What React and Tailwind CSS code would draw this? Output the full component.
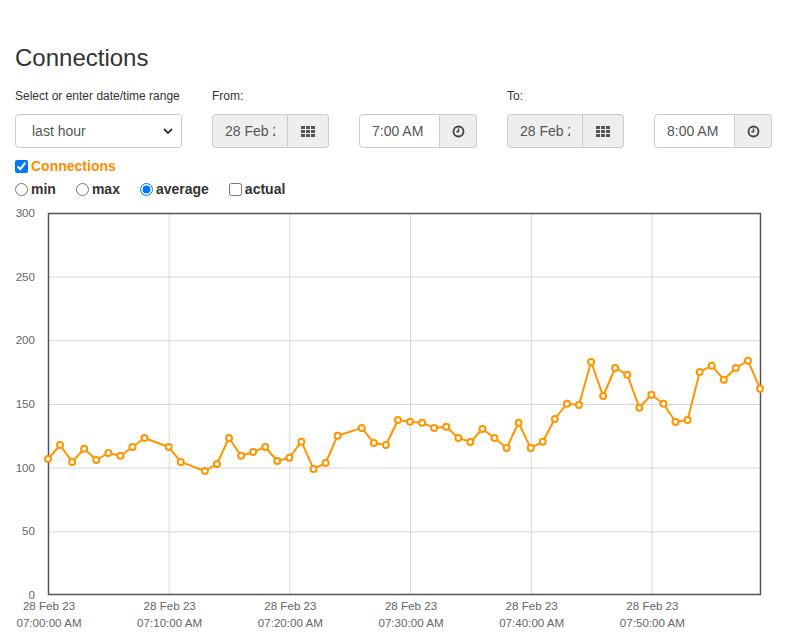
import React from "react";

// minute offset from 07:00, average connections
const points = [
  [0, 106.8], [1, 117.8], [2, 104.5], [3, 114.9], [4, 106], [5, 111.5], [6, 109.4], [7, 116.2], [8, 123.3],
  [10, 116.2], [11, 104.5], [13, 97.4], [14, 102.9], [15, 123.3], [16, 109.4], [17, 112.3], [18, 116.2],
  [19, 105.2], [20, 107.8], [21, 120.4], [22, 99], [23, 103.7], [24, 125.1], [26, 131.2], [27, 119.4],
  [28, 117.8], [29, 137.4], [30, 136.1], [31, 135.3], [32, 131.2], [33, 132.2], [34, 123.3], [35, 120.2],
  [36, 130.4], [37, 123.3], [38, 115.4], [39, 135.3], [40, 115.4], [41, 120.4], [42, 138.2], [43, 150.2],
  [44, 149.2], [45, 183], [46, 156.3], [47, 178.3], [48, 173], [49, 147.1], [50, 157.3], [51, 150.2],
  [52, 135.9], [53, 137.4], [54, 175.1], [55, 180.1], [56, 169.1], [57, 178.3], [58, 184], [59, 162],
];

const LEFT = 48;
const RIGHT = 760;
const TOP = 213;
const BOTTOM = 595;
const px = (m) => LEFT + (m * (RIGHT - LEFT)) / 59;
const py = (v) => BOTTOM - (v * (BOTTOM - TOP)) / 300;

const GridIcon = () => (
  <svg width="14" height="11" viewBox="0 0 14 11" fill="#555">
    {[0, 5, 10].map((x) =>
      [0, 4, 8].map((y) => <rect key={`${x}-${y}`} x={x} y={y} width="4" height="3" />)
    )}
  </svg>
);

const ClockIcon = () => (
  <svg width="13" height="13" viewBox="0 0 13 13" fill="none" stroke="#444" strokeWidth="1.8">
    <circle cx="6.5" cy="6.5" r="5" />
    <path d="M6.5 3.5 V6.8 H4.3" strokeWidth="1.5" />
  </svg>
);

const DateGroup = () => (
  <div className="flex h-[34px] w-[117px]">
    <input
      readOnly
      value="28 Feb 2023"
      className="w-[76px] min-w-0 rounded-l-[4px] border border-[#ccc] bg-[#eee] px-[12px] text-[14px] text-[#555] outline-none"
    />
    <button className="flex w-[41px] items-center justify-center rounded-r-[4px] border border-l-0 border-[#ccc] bg-[#eee]">
      <GridIcon />
    </button>
  </div>
);

const TimeGroup = ({ value }) => (
  <div className="flex h-[34px] w-[118px]">
    <input
      readOnly
      value={value}
      className="w-[81px] min-w-0 rounded-l-[4px] border border-[#ccc] bg-white px-[12px] text-[14px] text-[#555] outline-none"
    />
    <button className="flex w-[37px] items-center justify-center rounded-r-[4px] border border-l-0 border-[#ccc] bg-[#eee]">
      <ClockIcon />
    </button>
  </div>
);

const Chart = () => {
  const line = points.map(([m, v]) => `${px(m).toFixed(1)},${py(v).toFixed(1)}`).join(" ");
  const xTicks = [0, 10, 20, 30, 40, 50];
  return (
    <svg width="787" height="435" viewBox="0 199 787 435" className="block">
      {[50, 100, 150, 200, 250].map((v) => (
        <line key={v} x1={LEFT} x2={RIGHT} y1={py(v) + 0.5} y2={py(v) + 0.5} stroke="#d9d9d9" />
      ))}
      {xTicks.slice(1).map((m) => (
        <line key={m} x1={px(m) + 0.5} x2={px(m) + 0.5} y1={TOP} y2={BOTTOM} stroke="#d9d9d9" />
      ))}
      <rect x={LEFT + 0.5} y={TOP + 0.5} width={RIGHT - LEFT} height={BOTTOM - TOP - 1} fill="none" stroke="#555" strokeWidth="1.5" />

      <g fontFamily="'Liberation Sans', Arial, sans-serif" fontSize="11.6" fill="#666">
        {[0, 50, 100, 150, 200, 250, 300].map((v) => (
          <text key={v} x="35" y={py(v) + 4} textAnchor="end">{v}</text>
        ))}
        {xTicks.map((m) => (
          <g key={m}>
            <text x={px(m) + 1} y="610" textAnchor="middle">28 Feb 23</text>
            <text x={px(m) + 1} y="627" textAnchor="middle">{`07:${String(m).padStart(2, "0")}:00 AM`}</text>
          </g>
        ))}
      </g>

      <polyline points={line} fill="none" stroke="#ff9500" strokeWidth="2" strokeLinejoin="round" />
      {points.map(([m, v]) => (
        <circle key={m} cx={px(m)} cy={py(v)} r="3" fill="#fff" stroke="#ff9500" strokeWidth="2" />
      ))}
    </svg>
  );
};

export default function App() {
  return (
    <div className="min-h-screen bg-white font-['Liberation_Sans',Arial,sans-serif] text-[#333]">
      <div className="px-[15px] pt-[45px]">
        <h3 className="text-[24px] leading-[26px]">Connections</h3>

        <div className="mt-[17px] flex gap-[30px]">
          <div className="flex flex-col">
            <label className="h-[17px] text-[12px] leading-[17px]">Select or enter date/time range</label>
            <div className="relative mt-[9px] w-[167px]">
              <select className="h-[34px] w-full appearance-none rounded-[4px] border border-[#ccc] bg-white pl-[16px] text-[14px] text-[#555] outline-none">
                <option>last hour</option>
              </select>
              <svg className="pointer-events-none absolute right-[9px] top-[14px]" width="10" height="6" viewBox="0 0 10 6" fill="none" stroke="#333" strokeWidth="1.8">
                <path d="M1 1 L5 5 L9 1" />
              </svg>
            </div>
          </div>
          <div className="flex flex-col">
            <label className="h-[17px] text-[12px] leading-[17px]">From:</label>
            <div className="mt-[9px]"><DateGroup /></div>
          </div>
          <div className="flex flex-col">
            <div className="h-[17px]" />
            <div className="mt-[9px]"><TimeGroup value="7:00 AM" /></div>
          </div>
          <div className="flex flex-col">
            <label className="h-[17px] text-[12px] leading-[17px]">To:</label>
            <div className="mt-[9px]"><DateGroup /></div>
          </div>
          <div className="flex flex-col">
            <div className="h-[17px]" />
            <div className="mt-[9px]"><TimeGroup value="8:00 AM" /></div>
          </div>
        </div>

        <label className="mt-[8px] flex h-[20px] items-center text-[14px] font-bold text-[#ff8c00]">
          <input type="checkbox" defaultChecked className="m-0 mr-[3px] h-[13px] w-[13px]" />
          Connections
        </label>

        <div className="mt-[3px] flex h-[20px] items-center gap-[20px] text-[14px] font-bold">
          <label className="flex items-center">
            <input type="radio" name="agg" className="m-0 mr-[3px] h-[13px] w-[13px]" />
            min
          </label>
          <label className="flex items-center">
            <input type="radio" name="agg" className="m-0 mr-[3px] h-[13px] w-[13px]" />
            max
          </label>
          <label className="flex items-center">
            <input type="radio" name="agg" defaultChecked className="m-0 mr-[3px] h-[13px] w-[13px]" />
            average
          </label>
          <label className="flex items-center">
            <input type="checkbox" className="m-0 mr-[3px] h-[13px] w-[13px]" />
            actual
          </label>
        </div>
      </div>

      <Chart />
    </div>
  );
}
